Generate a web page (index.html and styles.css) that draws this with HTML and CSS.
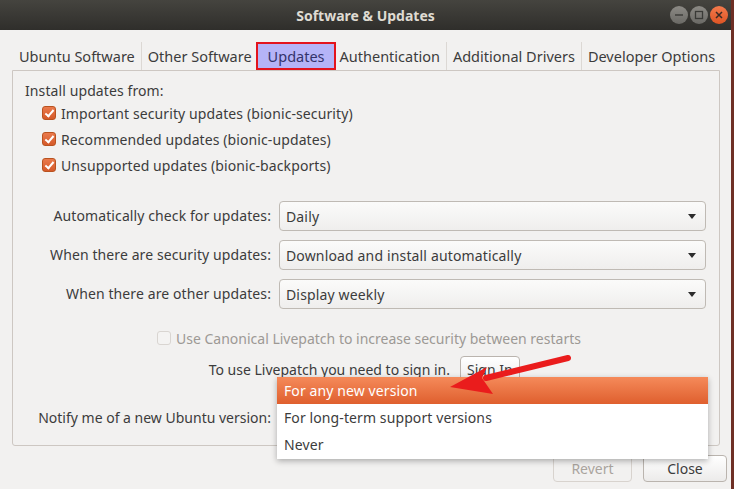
FILE: index.html
```html
<!DOCTYPE html>
<html lang="en">
<head>
  <meta charset="UTF-8" />
  <title>Software &amp; Updates</title>
  <link rel="stylesheet" href="styles.css">
</head>
<body>

  <div class="window">
    <div class="titlebar">
      <span class="title">Software &amp; Updates</span>
      <div class="controls">
        <span class="ctl ctl-min"><svg width="18" height="18" viewBox="0 0 18 18"><line x1="5" y1="9" x2="13" y2="9" stroke="#3a3a37" stroke-width="1.4"/></svg></span>
        <span class="ctl ctl-max"><svg width="18" height="18" viewBox="0 0 18 18"><rect x="5.5" y="5.5" width="7" height="7" fill="none" stroke="#3a3a37" stroke-width="1.3"/></svg></span>
        <span class="ctl ctl-close"><svg width="18" height="18" viewBox="0 0 18 18"><path d="M6 6 L12 12 M12 6 L6 12" stroke="#3a2a24" stroke-width="1.5"/></svg></span>
      </div>
    </div>

    <div class="content">
      <div class="tabs">
        <div class="tab">Ubuntu Software</div>
        <div class="tab">Other Software</div>
        <div class="tab active">Updates</div>
        <div class="tab">Authentication</div>
        <div class="tab">Additional Drivers</div>
        <div class="tab">Developer Options</div>
      </div>

      <div class="panel">
        <div class="heading">Install updates from:</div>
        <div class="check-row"><span class="check on"></span>Important security updates (bionic-security)</div>
        <div class="check-row"><span class="check on"></span>Recommended updates (bionic-updates)</div>
        <div class="check-row"><span class="check on"></span>Unsupported updates (bionic-backports)</div>

        <div class="combo-grid">
          <div class="combo-label">Automatically check for updates:</div>
          <div class="combo"><span>Daily</span><span class="caret"></span></div>
          <div class="combo-label">When there are security updates:</div>
          <div class="combo"><span>Download and install automatically</span><span class="caret"></span></div>
          <div class="combo-label">When there are other updates:</div>
          <div class="combo"><span>Display weekly</span><span class="caret"></span></div>
        </div>

        <div class="livepatch"><span class="check off"></span>Use Canonical Livepatch to increase security between restarts</div>

        <div class="signin-row">
          <div class="signin-label">To use Livepatch you need to sign in.</div>
          <button class="btn">Sign In</button>
        </div>

        <div class="combo-grid notify">
          <div class="combo-label">Notify me of a new Ubuntu version:</div>
          <div class="combo"><span class="hidden-value">For any new version</span><span class="caret"></span></div>
        </div>
      </div>

      <div class="actions">
        <button class="btn btn-wide" disabled>Revert</button>
        <button class="btn btn-wide">Close</button>
      </div>
    </div>

    <div class="popup">
      <div class="item selected">For any new version</div>
      <div class="item">For long-term support versions</div>
      <div class="item">Never</div>
    </div>

    <svg class="pointer" width="140" height="50" viewBox="0 0 140 50">
      <line x1="46" y1="28" x2="128" y2="8" stroke="#ea1c1c" stroke-width="6" stroke-linecap="round"/>
      <polygon points="10,37 47,17 42,28 53,44" fill="#ea1c1c"/>
    </svg>
  </div>

</body>
</html>
```

FILE: styles.css
```css
html, body {
  margin: 0;
  padding: 0;
}

body {
  font-family: "Noto Sans", "Open Sans", sans-serif;
  font-size: 14px;
  color: #3c3c3c;
  background: #f2f1f0;
}

.window {
  position: relative;
  width: 731px;
  height: 489px;
  background: #f2f1f0;
  border-right: 3px solid #6e2f25;
  overflow: hidden;
}

.titlebar {
  position: relative;
  height: 30px;
  background: linear-gradient(#45443f, #2f2e2b);
  display: flex;
  align-items: center;
  justify-content: center;
}

.title {
  color: #dfdbd2;
  font-weight: bold;
  font-size: 14px;
}

.controls {
  position: absolute;
  right: 3px;
  top: 6px;
  display: flex;
  gap: 2px;
}

.ctl {
  width: 18px;
  height: 18px;
  border-radius: 50%;
  background: linear-gradient(#8c8a85, #6a6965);
  display: flex;
}

.ctl-close {
  background: linear-gradient(#f37a4c, #dd5424);
}

.content {
  padding-top: 12px;
}

.tabs {
  display: flex;
  height: 28px;
  padding-left: 12px;
}

.tab {
  padding: 0 6px;
  line-height: 28px;
  font-size: 14.5px;
  border-left: 1px solid #dcd8d4;
  white-space: nowrap;
}

.tab:first-child {
  border-left: none;
  padding-left: 7px;
}

.tab.active {
  position: relative;
  background: #b5b4f7;
  outline: 2px solid #e3141d;
  outline-offset: -2px;
  color: #33336a;
  padding: 0 11px;
  margin: 0 -3px 0 -2px;
}

.panel {
  margin-left: 12px;
  width: 706px;
  height: 363px;
  border: 1px solid #cdc7c2;
  border-radius: 0 0 3px 3px;
  padding: 11px 0 0 0;
}

.heading {
  padding-left: 12px;
  line-height: 18px;
  letter-spacing: 0.1px;
}

.check-row {
  display: flex;
  align-items: center;
  height: 26px;
  padding-left: 29px;
  letter-spacing: 0.1px;
}

.check {
  width: 12px;
  height: 12px;
  border-radius: 3px;
  margin-right: 5px;
  flex: none;
  position: relative;
}

.check.on {
  background: linear-gradient(#ea7a4c, #d55a2a);
  border: 1px solid #b9521f;
}

.check.on::after {
  content: "";
  position: absolute;
  left: 4px;
  top: 1px;
  width: 3px;
  height: 7px;
  border: solid #fff;
  border-width: 0 2px 2px 0;
  transform: rotate(40deg);
}

.check.off {
  background: #f4f3f2;
  border: 1px solid #d9d5d1;
}

.combo-grid {
  display: grid;
  grid-template-columns: 258px 1fr;
  column-gap: 8px;
  row-gap: 9px;
  padding-right: 13px;
  margin-top: 23px;
}

.combo-label {
  text-align: right;
  line-height: 30px;
  letter-spacing: 0.1px;
  white-space: nowrap;
}

.combo {
  height: 28px;
  border: 1px solid #bfbab4;
  border-radius: 4px;
  background: linear-gradient(#fbfbfa, #efeeed);
  display: flex;
  align-items: center;
  justify-content: space-between;
  padding: 0 9px 0 6px;
  letter-spacing: 0.15px;
}

.hidden-value {
  visibility: hidden;
}

.caret {
  width: 0;
  height: 0;
  border-left: 4px solid transparent;
  border-right: 4px solid transparent;
  border-top: 5px solid #2c2c2c;
}

.livepatch {
  display: flex;
  align-items: center;
  height: 18px;
  margin-top: 20px;
  padding-left: 144px;
  color: #9d9995;
}

.signin-row {
  display: grid;
  grid-template-columns: 437px auto;
  column-gap: 10px;
  align-items: center;
  margin-top: 9px;
}

.signin-label {
  text-align: right;
  white-space: nowrap;
}

.btn {
  font-family: inherit;
  font-size: 14px;
  color: #3c3c3c;
  height: 27px;
  padding: 0 6px;
  border: 1px solid #bab4ae;
  border-radius: 4px;
  background: linear-gradient(#ffffff, #ecebea);
  justify-self: start;
}

.btn:disabled {
  color: #aaa49e;
  border-color: #d8d3ce;
  background: #f2f1f0;
}

.combo-grid.notify {
  margin-top: 20px;
}

.combo-grid.notify .combo-label {
  letter-spacing: 0;
}

.actions {
  display: flex;
  justify-content: flex-end;
  gap: 11px;
  margin-top: 9px;
  padding-right: 4px;
}

.btn-wide {
  width: 79px;
}

.btn-wide:last-child {
  width: 84px;
}

.popup {
  position: absolute;
  left: 277px;
  top: 377px;
  width: 431px;
  background: #ffffff;
  box-shadow: 0 2px 6px rgba(0, 0, 0, 0.3);
  padding-bottom: 1px;
}

.item {
  height: 27px;
  line-height: 27px;
  padding-left: 7px;
  letter-spacing: 0.1px;
}

.item.selected {
  background: linear-gradient(#f58a5a, #df5f2e);
  color: #ffffff;
}

.pointer {
  position: absolute;
  left: 440px;
  top: 350px;
}
```
